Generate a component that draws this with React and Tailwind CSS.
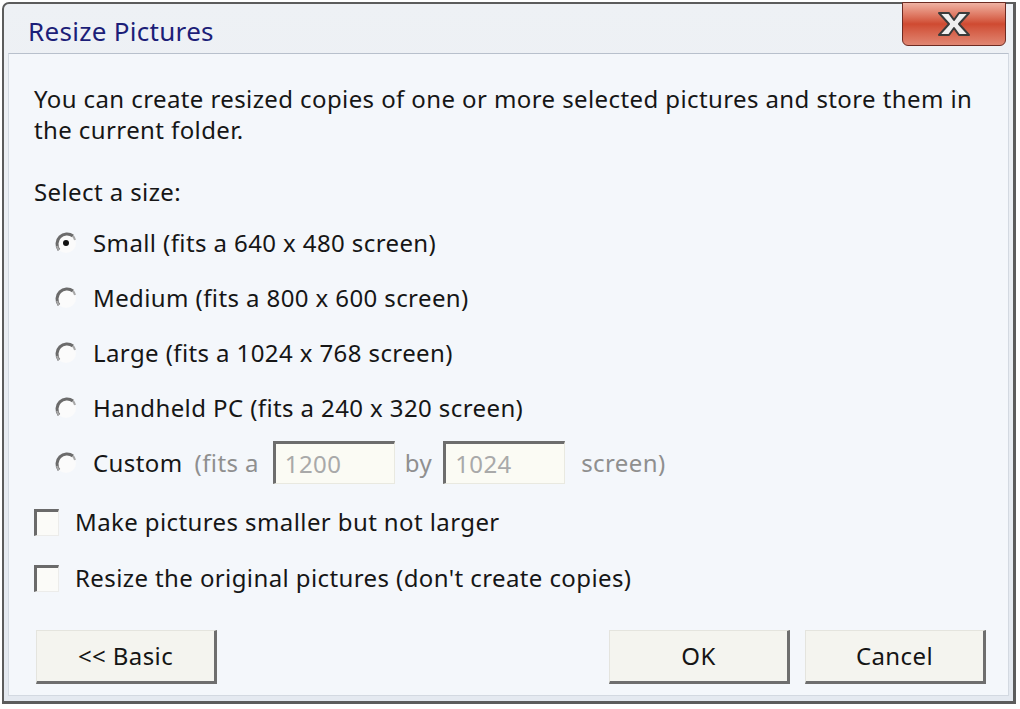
import React from 'react';

const font = { fontFamily: '"Noto Sans", "DejaVu Sans", sans-serif' };

const Radio = ({ checked }) => (
  <svg width="24" height="24" viewBox="0 0 24 24" className="shrink-0">
    <circle cx="12" cy="12" r="10" fill="#fbfbfb" />
    <path d="M5 19 A10 10 0 0 1 19 5" fill="none" stroke="#6b6b6b" strokeWidth="3" />
    <path d="M19 5 A10 10 0 0 1 21 9" fill="none" stroke="#a8a8a8" strokeWidth="2" />
    <path d="M5 19 A10 10 0 0 1 3 15" fill="none" stroke="#a8a8a8" strokeWidth="2" />
    {checked && <circle cx="12" cy="12" r="3" fill="#111" />}
  </svg>
);

const Checkbox = () => (
  <div className="w-[25px] h-[27px] shrink-0 bg-[#fbfbf8] border-t-[3px] border-l-[3px] border-t-[#6a6a6a] border-l-[#6a6a6a] border-r border-b border-r-[#ececea] border-b-[#ececea]" />
);

const Field = ({ value }) => (
  <div className="w-[122px] h-[43px] bg-[#fbfbf4] border-t-[3px] border-l-[3px] border-t-[#6d6d6d] border-l-[#6d6d6d] border-r border-b border-r-[#e9e9e0] border-b-[#e9e9e0] flex items-center pl-[9px] text-[#a9a9a9]">
    {value}
  </div>
);

const Button = ({ children, className }) => (
  <button className={`h-[54px] w-[181px] bg-[#f4f4ef] border-t border-l border-t-[#e4e4de] border-l-[#e4e4de] border-r-[3px] border-b-[3px] border-r-[#6e6e6e] border-b-[#6e6e6e] text-[#151515] flex items-center justify-center ${className || ''}`}>
    {children}
  </button>
);

const sizes = [
  { label: 'Small (fits a 640 x 480 screen)', checked: true },
  { label: 'Medium (fits a 800 x 600 screen)' },
  { label: 'Large (fits a 1024 x 768 screen)' },
  { label: 'Handheld PC (fits a 240 x 320 screen)' },
];

export default function App() {
  return (
    <div className="w-[1020px] h-[709px] bg-white overflow-hidden" style={font}>
      <div className="ml-[2px] mt-[2px] w-[1014px] h-[702px] border-t-2 border-l-2 border-r-[3px] border-b-[3px] border-[#5c5c5c] rounded-tl-[7px] bg-gradient-to-b from-[#eef1f5] to-[#e4e9f0] flex flex-col">
        {/* title bar */}
        <div className="h-[49px] flex items-start justify-between shrink-0">
          <div className="pl-[24px] pt-[11px] text-[26px] leading-[32px] tracking-[0.3px] text-[#1c1e78]">Resize Pictures</div>
          <div className="mr-[7px] -mt-[2px] w-[104px] h-[44px] rounded-b-[6px] border border-[#6d2b22] bg-gradient-to-b from-[#eeb1a2] via-[#cf4a31] to-[#e08672] flex items-center justify-center">
            <svg width="38" height="28" viewBox="0 0 38 28">
              <path d="M4 3 L14 3 L19 10 L24 3 L34 3 L24 14 L34 25 L24 25 L19 18 L14 25 L4 25 L14 14 Z" fill="#f0f0f0" stroke="#3b3b3b" strokeWidth="2" strokeLinejoin="round" />
            </svg>
          </div>
        </div>
        {/* content */}
        <div className="flex-1 mx-[4px] mb-[5px] border-t border-[#b8c0cc] bg-[#f4f7fb] border-l border-r border-b border-l-[#d3d9e1] border-r-[#d3d9e1] border-b-[#d3d9e1] flex flex-col text-[24px] tracking-[0.4px] text-[#161616] pt-[29px] pl-[25px] pr-[22px]">
          <p className="leading-[31px]">
            You can create resized copies of one or more selected pictures and store them in the current folder.
          </p>
          <div className="leading-[31px] mt-[31px]">Select a size:</div>
          <div className="mt-[8px] pl-[20px] flex flex-col">
            {sizes.map((s) => (
              <div key={s.label} className="h-[55px] flex items-center gap-[15px]">
                <Radio checked={s.checked} />
                <span>{s.label}</span>
              </div>
            ))}
            <div className="h-[55px] flex items-center">
              <Radio />
              <span className="ml-[15px]">Custom</span>
              <span className="ml-[12px] text-[#8f8f8f]">(fits a</span>
              <div className="ml-[14px]"><Field value="1200" /></div>
              <span className="ml-[10px] text-[#8f8f8f]">by</span>
              <div className="ml-[11px]"><Field value="1024" /></div>
              <span className="ml-[16px] text-[#8f8f8f]">screen)</span>
            </div>
          </div>
          <div className="mt-[4px] flex flex-col">
            <div className="h-[56px] flex items-center gap-[16px]">
              <Checkbox />
              <span>Make pictures smaller but not larger</span>
            </div>
            <div className="h-[56px] flex items-center gap-[16px]">
              <Checkbox />
              <span>Resize the original pictures (don't create copies)</span>
            </div>
          </div>
          <div className="mt-[24px] flex items-center">
            <Button className="ml-[2px]">&lt;&lt; Basic</Button>
            <div className="flex-1" />
            <Button>OK</Button>
            <Button className="ml-[15px]">Cancel</Button>
          </div>
        </div>
      </div>
    </div>
  );
}
